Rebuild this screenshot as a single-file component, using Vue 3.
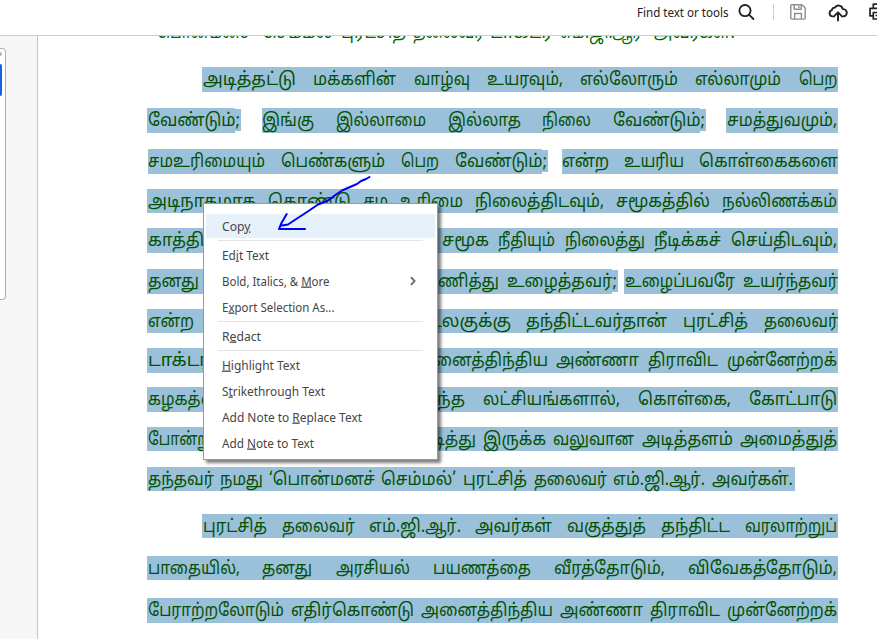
<script setup>
// Every run is a highlighted stretch of a line: [left, right, endsWithSemicolon, words],
// every word is [text, left, right] in page pixels.
const ORIGIN = 147
const source = [
  { top: 20, height: 24, plain: true, runs: [[152, 736, false, [['‘பொன்மனச்', 153, 251], ['செம்மல்’', 262, 336], ['புரட்சித்', 341, 406], ['தலைவர்', 413, 484], ['டாக்டர்', 490, 553], ['எம்.ஜி.ஆர்', 560, 642], ['அவர்கள்.', 654, 735]]]] },
  { top: 67, height: 25, runs: [[202, 838, false, [['அடித்தட்டு', 203, 296], ['மக்களின்', 313, 396], ['வாழ்வு', 414, 470], ['உயரவும்,', 487, 563], ['எல்லோரும்', 580, 678], ['எல்லாமும்', 695, 781], ['பெற', 799, 837.5]]]] },
  { top: 108, height: 25, runs: [[147, 241, true, [['வேண்டும்;', 148, 240]]], [262, 706, true, [['இங்கு', 262, 314], ['இல்லாமை', 336, 426], ['இல்லாத', 448, 521], ['நிலை', 542, 591], ['வேண்டும்;', 613, 705]]], [726, 838, false, [['சமத்துவமும்,', 727, 837]]]] },
  { top: 149, height: 25, runs: [[148, 548, true, [['சமஉரிமையும்', 148, 265], ['பெண்களும்', 281, 385], ['பெற', 401, 439], ['வேண்டும்;', 455, 547]]], [562, 838, false, [['என்ற', 562, 609], ['உயரிய', 624, 684], ['கொள்கைகளை', 699, 838]]]] },
  { top: 189, height: 24, runs: [[147, 838, false, [['அடிநாதமாக', 148, 256], ['கொண்டு', 268, 351], ['சம', 363, 388], ['உரிமை', 400, 463], ['நிலைத்திடவும்,', 475, 604], ['சமூகத்தில்', 616, 710], ['நல்லிணக்கம்', 722, 837]]]] },
  { top: 228, height: 25, runs: [[147, 838, false, [['காத்திடவும்,', 148, 252], ['சமூக', 442, 489], ['நீதியும்', 498, 555], ['நிலைத்து', 565, 645], ['நீடிக்கச்', 654, 721], ['செய்திடவும்,', 731, 837]]]] },
  { top: 269, height: 25, runs: [[147, 618, true, [['தனது', 148, 199], ['அர்ப்பணித்து', 385, 499], ['உழைத்தவர்;', 507, 617]]], [624, 838, false, [['உழைப்பவரே', 625, 735], ['உயர்ந்தவர்', 743, 838]]]] },
  { top: 309, height: 24, runs: [[147, 838, false, [['என்ற', 148, 194], ['உலகுக்கு', 423, 511], ['தந்திட்டவர்தான்', 526, 667], ['புரட்சித்', 683, 748], ['தலைவர்', 764, 838]]]] },
  { top: 348, height: 25, runs: [[147, 838, false, [['டாக்டர்', 148, 211], ['அனைத்திந்திய', 415, 548], ['அண்ணா', 556, 639], ['திராவிட', 648, 718], ['முன்னேற்றக்', 727, 837]]]] },
  { top: 387, height: 25, runs: [[147, 838, false, [['கழகத்தை', 148, 232], ['சிறந்த', 405, 465], ['லட்சியங்களால்,', 483, 620], ['கொள்கை,', 638, 731], ['கோட்பாடு', 749, 837]]]] },
  { top: 427, height: 24, runs: [[147, 838, false, [['போன்று', 148, 214], ['பிடித்து', 415, 476], ['இருக்க', 483, 546], ['வலுவான', 553, 634], ['அடித்தளம்', 642, 733], ['அமைத்துத்', 740, 837]]]] },
  { top: 467, height: 24, runs: [[147, 795, false, [['தந்தவர்', 148, 214], ['நமது', 220, 263], ['‘பொன்மனச்', 269, 375], ['செம்மல்’', 381, 456], ['புரட்சித்', 463, 527], ['தலைவர்', 534, 607], ['எம்.ஜி.ஆர்.', 613, 705], ['அவர்கள்.', 712, 793]]]] },
  { top: 514, height: 24, runs: [[202, 838, false, [['புரட்சித்', 203, 267], ['தலைவர்', 282, 355], ['எம்.ஜி.ஆர்.', 369, 461], ['அவர்கள்', 475, 552], ['வகுத்துத்', 567, 646], ['தந்திட்ட', 661, 730], ['வரலாற்றுப்', 745, 837]]]] },
  { top: 556, height: 24, runs: [[147, 838, false, [['பாதையில்,', 148, 240], ['தனது', 262, 312], ['அரசியல்', 336, 410], ['பயணத்தை', 433, 531], ['வீரத்தோடும்,', 554, 665], ['விவேகத்தோடும்,', 688, 837]]]] },
  { top: 598, height: 25, runs: [[147, 838, false, [['பேராற்றலோடும்', 148, 284], ['எதிர்கொண்டு', 291, 414], ['அனைத்திந்திய', 421, 553], ['அண்ணா', 560, 643], ['திராவிட', 650, 720], ['முன்னேற்றக்', 727, 837]]]] },
]

// Turns page pixels into gaps between neighbours, so that the text flows.
let bottom = 20
const lines = source.map((l) => {
  const gap = l.top - bottom
  bottom = l.top + l.height
  let x = ORIGIN
  const runs = l.runs.map(([x0, x1, semi, words]) => {
    const left = x0 - x
    x = x1
    let wx = x0
    return {
      left, width: x1 - x0, semi,
      words: words.map(([text, a, b]) => {
        const w = { text, left: a - wx, width: b - a }
        wx = b
        return w
      }),
    }
  })
  return { gap, height: l.height, plain: l.plain, runs }
})

const groups = [
  [['Cop', 'y', '', 28.5]],
  [['Ed', 'i', 't Text', 47], ['Bold, Italics, & ', 'M', 'ore', 107.5], ['E', 'x', 'port Selection As...', 112.5]],
  [['R', 'e', 'dact', 39]],
  [['', 'H', 'ighlight Text', 78], ['S', 't', 'rikethrough Text', 103], ['Add Note to ', 'R', 'eplace Text', 140], ['Add ', 'N', 'ote to Text', 92]],
]
</script>

<template>
  <div class="app">
    <header class="toolbar">
      <svg class="find" width="92" height="20"><text x="0" y="15" textLength="91.5" lengthAdjust="spacingAndGlyphs">Find text or tools</text></svg>
      <svg class="search" width="18" height="18" viewBox="0 0 18 18" fill="none" stroke="#222" stroke-width="1.8" stroke-linecap="round">
        <circle cx="7" cy="6.6" r="5.6" /><path d="M11.2 10.900 15.400 15" />
      </svg>
      <i class="bar"></i>
      <svg class="save" width="16" height="16" viewBox="0 0 16 16" fill="none" stroke="#8e8e8e" stroke-width="1.4" stroke-linejoin="round">
        <path d="M1.8.8H12l3.2 3.1v10.2a1 1 0 0 1-1 1H1.8a1 1 0 0 1-1-1V1.8a1 1 0 0 1 1-1Z" />
        <path d="M4.2 1v4.3h7V1M8.9 2v2M4.6 15V9.500h6.800V15" />
      </svg>
      <svg class="cloud" width="20" height="18" viewBox="0 0 20 18" fill="none" stroke="#222" stroke-width="1.9" stroke-linecap="round" stroke-linejoin="round">
        <path d="M6.2 12.4H4.6a3.200 3.200 0 0 1-.6-6.300 2.400 2.400 0 0 1 2.800-2.400A4.300 4.300 0 0 1 14.800 5.200a3.600 3.600 0 0 1 .700 7.200h-1.700" />
        <path d="M10 16.5V8.700M6.900 11.400l3.100-3.100 3.100 3.100" />
      </svg>
      <svg class="print" width="18" height="18" viewBox="0 0 18 18" fill="none" stroke="#222" stroke-width="1.7" stroke-linejoin="round">
        <path d="M4.300 5V1.200h9.400V5M3.600 12.800H1V5.300h16v7.500h-2.600M4.300 9.500h9.400v6.500H4.300ZM6.500 12.500h5" />
      </svg>
    </header>

    <div class="body">
      <aside class="side">
        <div class="panel"><i class="knob"></i><i class="active"></i></div>
      </aside>
      <main class="page">
        <div class="sheet">
          <div v-for="(l, i) in lines" :key="i" class="line" :class="{ plain: l.plain }" :style="{ marginTop: l.gap + 'px', height: l.height + 'px' }">
            <div v-for="(r, j) in l.runs" :key="j" class="run" :class="{ semi: r.semi }" :style="{ marginLeft: r.left + 'px', width: r.width + 'px' }">
              <svg v-for="(w, k) in r.words" :key="k" class="word" :width="w.width" height="24" :style="{ marginLeft: w.left + 'px' }">
                <text x="0" y="17.6" :textLength="w.width" lengthAdjust="spacingAndGlyphs">{{ w.text }}</text>
              </svg>
            </div>
          </div>
        </div>
      </main>
    </div>

    <nav class="menu">
      <ul v-for="(g, i) in groups" :key="i" :class="{ hover: i === 0 }">
        <li v-for="m in g" :key="m[1] + m[2]">
          <svg class="label" :width="m[3]" height="20"><text x="0" y="14.5" :textLength="m[3]" lengthAdjust="spacingAndGlyphs">{{ m[0] }}<tspan class="key">{{ m[1] }}</tspan>{{ m[2] }}</text></svg>
          <svg v-if="m[1] === 'M'" class="chev" width="6" height="10" viewBox="0 0 6 10" fill="none" stroke="#6e6e6e" stroke-width="1.9"><path d="M1 1.2 4.6 5 1 8.8" /></svg>
        </li>
      </ul>
    </nav>

    <svg class="ink" width="100" height="60" viewBox="0 0 100 60" fill="none" stroke="#0000f5" stroke-width="2" stroke-linecap="round" stroke-linejoin="round">
      <path d="M95.500 4 92 6 87 8 83 11 76 14 68 17.500 62 21.500 54 27.500 44 31.500 33 39 23 45.500 14 51.500 8 52.500" />
      <path d="M12.700 41 7.500 50 5 56H31" />
    </svg>
  </div>
</template>

<style>
body { margin: 0; overflow: hidden; background: #fff; }
</style>

<style scoped>
.app { position: relative; width: 877px; height: 639px; overflow: hidden; background: #fff; display: flex; flex-direction: column; font-family: "Noto Sans", "Open Sans", sans-serif; }
.toolbar { height: 35px; flex: none; box-sizing: content-box; border-bottom: 1px solid #cfcfcf; display: flex; align-items: flex-start; padding-left: 637px; overflow: hidden; }
.toolbar svg { flex: none; }
.find { margin-top: 2px; font-size: 13px; fill: #222; overflow: visible; }
.search { margin: 4px 0 0 9px; }
.bar { flex: none; width: 1px; height: 16px; background: #cfcfcf; margin: 4px 0 0 17px; }
.save { margin: 4px 0 0 16px; }
.cloud { margin: 4px 0 0 22px; }
.print { margin: 3px 0 0 21px; }
.body { flex: 1; min-height: 0; display: flex; }
.side { width: 37px; flex: none; background: #f7f7f7; border-right: 1px solid #c6c6c6; padding-top: 12px; }
.panel { width: 5px; height: 250px; background: #fff; border: 1px solid #b0b0b0; border-left: 0; border-radius: 0 4px 4px 0; display: flex; flex-direction: column; }
.knob { width: 2px; height: 4px; margin-top: 3px; background: #b5b5b5; border-radius: 0 2px 2px 0; }
.active { width: 2px; height: 32px; margin-top: 8px; background: #0d66e0; border-radius: 0 2px 2px 0; }
.page { flex: 1; min-width: 0; overflow: hidden; }
.sheet { margin: -16px 0 0 109px; display: flow-root; }
.line { display: flex; }
.run { flex: none; display: flex; background: #9bc0da; }
.run.semi { background: linear-gradient(#9bc0da, #9bc0da) 0 0 / calc(100% - 6px) 100% no-repeat, linear-gradient(#9bc0da, #9bc0da) 100% 1px / 6px calc(100% - 3px) no-repeat; }
.plain .run { background: none; }
.word { flex: none; overflow: visible; font-family: "Noto Sans Tamil", "Noto Sans", sans-serif; font-size: 18px; fill: #045004; }
.plain .word { fill: #006400; }
.menu { position: absolute; left: 203px; top: 203px; width: 233px; height: 245px; background: #fff; border: 1px solid #999; box-shadow: 3px 3px 3px rgba(0, 0, 0, .5); padding-top: 10px; box-sizing: content-box; }
.menu ul { list-style: none; margin: 0 14px; padding: 1px 0; border-bottom: 1px solid #e4e4e4; }
.menu ul:last-child { border: 0; }
.menu li { height: 26px; display: flex; align-items: center; padding-left: 4px; }
.menu ul.hover { padding: 0 0 2px; }
.menu ul.hover li { height: 24px; margin: 0 -12px; padding-left: 16px; background: #e6f1fa; }
.label { font-size: 13px; fill: #464646; overflow: visible; }
.key { text-decoration: underline; }
.chev { margin-left: auto; margin-right: 7px; }
.ink { position: absolute; left: 274px; top: 173px; }
</style>
